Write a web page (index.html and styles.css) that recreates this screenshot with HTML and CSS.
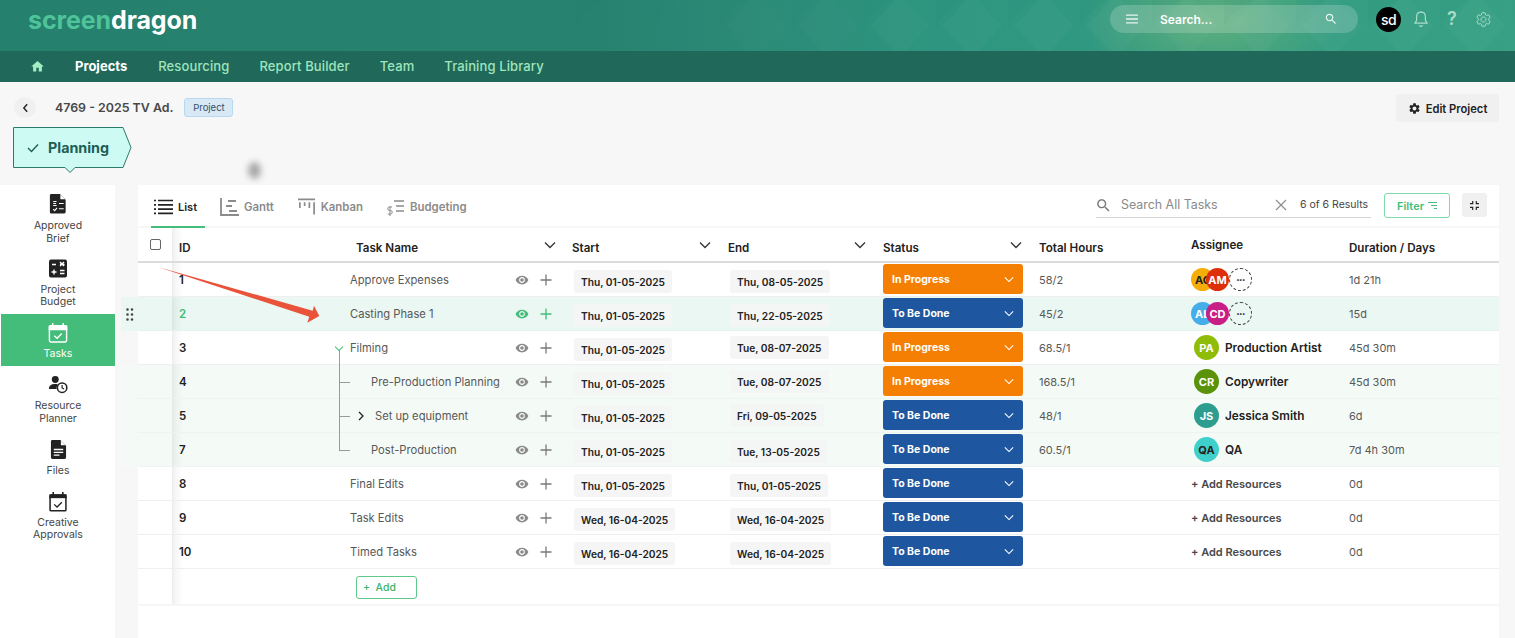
FILE: index.html
```html
<!DOCTYPE html>
<html lang="en">
<head>
<meta charset="utf-8">
<title>Screendragon - Tasks</title>
<link rel="stylesheet" href="styles.css">
</head>
<body>
<svg class="defs" width="0" height="0" aria-hidden="true">
  <symbol id="i-eye" viewBox="0 0 24 24"><path d="M12 4.5C7 4.5 2.73 7.61 1 12c1.73 4.39 6 7.5 11 7.5s9.27-3.11 11-7.5c-1.73-4.39-6-7.5-11-7.5zM12 17c-2.76 0-5-2.24-5-5s2.24-5 5-5 5 2.24 5 5-2.24 5-5 5zm0-8c-1.66 0-3 1.34-3 3s1.34 3 3 3 3-1.34 3-3-1.34-3-3-3z"/></symbol>
  <symbol id="i-plus" viewBox="0 0 12 12"><path d="M6 .5v11M.5 6h11" fill="none" stroke="currentColor" stroke-width="1.3"/></symbol>
  <symbol id="i-down" viewBox="0 0 12 8"><path d="M1 1.5l5 5 5-5" fill="none" stroke="currentColor" stroke-width="1.3"/></symbol>
  <symbol id="i-gear" viewBox="0 0 24 24"><path d="M19.14 12.94c.04-.3.06-.61.06-.94 0-.32-.02-.64-.07-.94l2.03-1.58c.18-.14.23-.41.12-.61l-1.92-3.32c-.12-.22-.37-.29-.59-.22l-2.39.96c-.5-.38-1.03-.7-1.62-.94l-.36-2.54c-.04-.24-.24-.41-.48-.41h-3.84c-.24 0-.43.17-.47.41l-.36 2.54c-.59.24-1.13.57-1.62.94l-2.39-.96c-.22-.08-.47 0-.59.22L2.74 8.87c-.12.21-.08.47.12.61l2.03 1.58c-.05.3-.09.63-.09.94s.02.64.07.94l-2.03 1.58c-.18.14-.23.41-.12.61l1.92 3.32c.12.22.37.29.59.22l2.39-.96c.5.38 1.03.7 1.62.94l.36 2.54c.05.24.24.41.48.41h3.84c.24 0 .44-.17.47-.41l.36-2.54c.59-.24 1.13-.56 1.62-.94l2.39.96c.22.08.47 0 .59-.22l1.92-3.32c.12-.22.07-.47-.12-.61l-2.01-1.58zM12 15.6c-1.98 0-3.6-1.62-3.6-3.6s1.62-3.6 3.6-3.6 3.6 1.62 3.6 3.6-1.62 3.6-3.6 3.6z"/></symbol>
  <symbol id="i-search" viewBox="0 0 24 24"><path d="M15.5 14h-.79l-.28-.27C15.41 12.59 16 11.11 16 9.5 16 5.91 13.09 3 9.5 3S3 5.91 3 9.5 5.91 16 9.5 16c1.61 0 3.09-.59 4.23-1.57l.27.28v.79l5 4.99L20.49 19l-4.99-5zm-6 0C7.01 14 5 11.99 5 9.5S7.01 5 9.5 5 14 7.01 14 9.5 11.99 14 9.5 14z"/></symbol>
</svg>

<div class="page">
  <header class="topbar">
    <svg class="topbar-pattern" width="100%" height="51" aria-hidden="true">
      <defs>
        <pattern id="diamonds" width="72" height="52" patternUnits="userSpaceOnUse">
          <path d="M36 -8Q48 10 66 26Q48 42 36 60Q24 42 6 26Q24 10 36 -8Z" fill="#ffffff" fill-opacity=".028"/>
          <path d="M0 -26Q12 -8 30 0Q12 8 0 26Q-12 8 -30 0Q-12 -8 0 -26Z" fill="#0b5a4c" fill-opacity=".035"/>
        </pattern>
        <linearGradient id="fade" x1="0" x2="1" y1="0" y2="0">
          <stop offset=".35" stop-color="#000"/><stop offset=".7" stop-color="#fff"/>
        </linearGradient>
        <mask id="fademask"><rect width="100%" height="51" fill="url(#fade)"/></mask>
      </defs>
      <rect width="100%" height="51" fill="url(#diamonds)" mask="url(#fademask)"/>
    </svg>
    <div class="logo"><span class="logo-a">screen</span><span class="logo-b">dragon</span></div>
    <div class="top-tools">
      <div class="global-search">
        <svg class="gs-menu" viewBox="0 0 12 10" width="12" height="10"><path d="M0 1.2h12M0 5h12M0 8.8h12" stroke="#e6f4ee" stroke-width="1.3"/></svg>
        <span class="gs-text">Search...</span>
        <svg class="gs-icon" width="14" height="14"><use href="#i-search"/></svg>
      </div>
      <div class="user-dot">sd</div>
      <svg class="tool-bell" viewBox="0 0 16 18" width="16" height="18"><path d="M8 2.2c-2.8 0-4.4 2-4.4 4.8v3.4L2 13.2h12l-1.6-2.8V7c0-2.8-1.600-4.800-4.400-4.800zM6.500 15.200c.3.900.9 1.300 1.500 1.300s1.200-.4 1.500-1.300M8 2.200V1" fill="none" stroke="#a9dcc8" stroke-width="1.200"/></svg>
      <span class="tool-help">?</span>
      <svg class="tool-gear" viewBox="0 0 24 24" width="17" height="17"><use href="#i-gear"/></svg>
    </div>
  </header>

  <nav class="mainnav">
    <svg class="nav-home" viewBox="0 0 24 24" width="15" height="15"><path d="M10 20v-6h4v6h5v-8h3L12 3 2 12h3v8z"/></svg>
    <a class="nav-link nav-current">Projects</a>
    <a class="nav-link">Resourcing</a>
    <a class="nav-link">Report Builder</a>
    <a class="nav-link">Team</a>
    <a class="nav-link">Training Library</a>
  </nav>

  <div class="crumbs">
    <button class="back"><svg viewBox="0 0 8 12" width="7" height="10"><path d="M6 1.500L2 6l4 4.500" fill="none" stroke="#222" stroke-width="1.700"/></svg></button>
    <h1 class="proj-title">4769 - 2025 TV Ad.</h1>
    <span class="proj-badge">Project</span>
    <button class="edit-btn"><svg width="13" height="13"><use href="#i-gear"/></svg>Edit Project</button>
  </div>

  <div class="stage">
    <svg class="stage-shape" viewBox="0 0 120 47" width="120" height="47" aria-hidden="true"><path d="M.5.500H110l8 20-8 20H62l-5 5-5-5H.5z" fill="#cdfbf3" stroke="#2c7a6a"/></svg>
    <svg class="stage-check" viewBox="0 0 12 10" width="12" height="10"><path d="M1 5l3.500 3.500L11 1.500" fill="none" stroke="#1d5e55" stroke-width="1.400"/></svg>
    <span class="stage-text">Planning</span>
  </div>

  <div class="main">
    <aside class="side">
      <a class="side-item side-first">
        <svg viewBox="0 0 20 22" width="20" height="21"><path d="M3 1h9l6 6v13a1.500 1.500 0 0 1-1.500 1.500h-14A1.500 1.500 0 0 1 1.500 20V2.500A1.500 1.500 0 0 1 3 1z" fill="#222"/><path d="M12.500 1.500v5h5z" fill="#fff"/><path d="M5 9h3.500M5 11h3M5 13h3.500M11 11h5M5 17l1.500 1.500L9 15.500M11 16.500h5" stroke="#fff" stroke-width="1.100" fill="none"/></svg>
        <span>Approved<br>Brief</span>
      </a>
      <a class="side-item">
        <svg viewBox="0 0 20 20" width="20" height="21"><rect x="1" y="1" width="18" height="18" rx="2" fill="#222"/><path d="M4 6h4M6 11v5M3.500 13.500h5M12 6h4.500M12 12h4.500M12 15h4.500M12 3.500l4 4M16 3.500l-4 4" stroke="#fff" stroke-width="1.400" fill="none"/></svg>
        <span>Project<br>Budget</span>
      </a>
      <a class="side-item side-active">
        <svg viewBox="0 0 20 22" width="20" height="21"><path d="M2.500 4h15a1.500 1.500 0 0 1 1.500 1.500v14a1.500 1.500 0 0 1-1.500 1.500h-15A1.500 1.500 0 0 1 1 19.500v-14A1.500 1.500 0 0 1 2.500 4z" fill="none" stroke="#fff" stroke-width="1.500"/><path d="M1 4.500h18v3.500H1zM4.500 1v4M15.500 1v4" fill="#fff" stroke="#fff" stroke-width="1.500"/><path d="M6 14.500l3 2.500 5-5" fill="none" stroke="#fff" stroke-width="1.400"/></svg>
        <span>Tasks</span>
      </a>
      <a class="side-item">
        <svg viewBox="0 0 22 20" width="20" height="20"><circle cx="8" cy="4.500" r="3.800" fill="#222"/><path d="M1 15c0-4 3-5.500 7-5.500 1 0 2 .1 2.900.4A6.500 6.500 0 0 0 9.500 15z" fill="#222"/><circle cx="15.500" cy="13.500" r="5.200" fill="#fff" stroke="#222" stroke-width="1.700"/><path d="M15.500 10.500v3.300l2.200 1.200" fill="none" stroke="#222" stroke-width="1.300"/></svg>
        <span>Resource<br>Planner</span>
      </a>
      <a class="side-item">
        <svg viewBox="0 0 18 22" width="17" height="21"><path d="M2.500 1H11l6 6v12.500a1.500 1.500 0 0 1-1.500 1.500h-13A1.500 1.500 0 0 1 1 19.500v-17A1.500 1.500 0 0 1 2.500 1z" fill="#222"/><path d="M11.500 1.500v5h5z" fill="#fff"/><path d="M4 11h10M4 14h10M4 17h6" stroke="#fff" stroke-width="1.400"/></svg>
        <span>Files</span>
      </a>
      <a class="side-item">
        <svg viewBox="0 0 20 22" width="20" height="21"><rect x="1.700" y="4.200" width="16.600" height="16.600" rx="1" fill="#fff" stroke="#222" stroke-width="1.600"/><path d="M1 3.500h18v4H1z" fill="#222"/><path d="M5 1v4M15 1v4" stroke="#222" stroke-width="1.700"/><path d="M6 14l3 2.800 5-5" fill="none" stroke="#222" stroke-width="1.400"/></svg>
        <span>Creative<br>Approvals</span>
      </a>
    </aside>

    <section class="board">
      <div class="tabbar">
        <div class="tabs">
          <a class="tab tab-active">
            <svg viewBox="0 0 19 16" width="19" height="16"><path d="M0 1.500h2M4 1.500h15M0 5.800h2M4 5.800h15M0 10.100h2M4 10.100h15M0 14.400h2M4 14.400h15" stroke="#222" stroke-width="1.700"/></svg>List
          </a>
          <a class="tab">
            <svg viewBox="0 0 19 18" width="19" height="18"><path d="M1 0v17h18M8 3h8M6 8h6M9 13h8" fill="none" stroke="#8b8b8b" stroke-width="1.800"/></svg>Gantt
          </a>
          <a class="tab">
            <svg viewBox="0 0 19 18" width="18" height="18"><path d="M0 1h18M2 4v6M7 4v4M12 4v6M17 4v13" fill="none" stroke="#8b8b8b" stroke-width="1.800"/></svg>Kanban
          </a>
          <a class="tab">
            <svg viewBox="0 0 18 18" width="18" height="18"><path d="M7 3h10M9 8h8M9 13h8" stroke="#8b8b8b" stroke-width="1.600"/><path d="M5 9H2.500a1.500 1.500 0 0 0 0 3.500h1a1.500 1.500 0 0 1 0 3.500H.8M3 8v10" fill="none" stroke="#8b8b8b" stroke-width="1"/></svg>Budgeting
          </a>
        </div>
        <div class="board-tools">
          <div class="task-search">
            <svg class="ts-icon" width="17" height="17"><use href="#i-search"/></svg>
            <span class="ts-text">Search All Tasks</span>
            <svg class="ts-x" viewBox="0 0 12 12" width="12" height="12"><path d="M1 1l10 10M11 1L1 11" stroke="#8a8a8a" stroke-width="1.100"/></svg>
            <span class="ts-count">6 of 6 Results</span>
          </div>
          <button class="filter-btn">Filter<svg viewBox="0 0 9 7" width="9" height="7"><path d="M0 .5h9M3 3.500h6M6 6.500h3" stroke="#43bd79" stroke-width="1"/></svg></button>
          <button class="full-btn"><svg viewBox="0 0 10 10" width="9" height="9"><path d="M3 0v3H0M7 0v3h3M3 10V7H0M7 10V7h3" fill="none" stroke="#222" stroke-width="1.300"/></svg></button>
        </div>
      </div>

      <div class="row head">
        <div class="gut"></div>
        <div class="c-check"><span class="checkbox"></span></div>
        <div class="c-id">ID</div>
        <div class="c-h c-h-name">Task Name<svg width="12" height="8"><use href="#i-down"/></svg></div>
        <div class="c-h">Start<svg width="12" height="8"><use href="#i-down"/></svg></div>
        <div class="c-h">End<svg width="12" height="8"><use href="#i-down"/></svg></div>
        <div class="c-h c-h-status">Status<svg width="12" height="8"><use href="#i-down"/></svg></div>
        <div class="c-h">Total Hours</div>
        <div class="c-h c-h-assign">Assignee</div>
        <div class="c-h">Duration / Days</div>
      </div>

      <div class="row">
        <div class="gut"></div><div class="c-check"></div><div class="c-id">1</div>
        <div class="c-name"><span class="t-name">Approve Expenses</span><svg class="eye" width="14" height="14"><use href="#i-eye"/></svg><svg class="plus" width="12" height="12"><use href="#i-plus"/></svg></div>
        <div class="c-date"><span class="pill">Thu, 01-05-2025</span></div>
        <div class="c-date"><span class="pill">Thu, 08-05-2025</span></div>
        <div class="c-status"><span class="st st-prog">In Progress<svg width="10" height="7"><use href="#i-down"/></svg></span></div>
        <div class="c-text">58/2</div>
        <div class="c-assign"><span class="av av-sm av-ac">AC</span><span class="av av-sm av-am">AM</span><span class="av-more">•••</span></div>
        <div class="c-text">1d 21h</div>
      </div>

      <div class="row row-hl">
        <div class="gut"><svg viewBox="0 0 8 13" width="8" height="13"><path d="M1.500 1.500h.01M6 1.500h.01M1.500 6.500h.01M6 6.500h.01M1.500 11.500h.01M6 11.500h.01" stroke="#444" stroke-width="2.600" stroke-linecap="round"/></svg></div>
        <div class="c-check"></div><div class="c-id c-id-on">2</div>
        <div class="c-name c-name-on"><span class="t-name">Casting Phase 1</span><svg class="eye" width="14" height="14"><use href="#i-eye"/></svg><svg class="plus" width="12" height="12"><use href="#i-plus"/></svg></div>
        <div class="c-date"><span class="pill">Thu, 01-05-2025</span></div>
        <div class="c-date"><span class="pill">Thu, 22-05-2025</span></div>
        <div class="c-status"><span class="st st-todo">To Be Done<svg width="10" height="7"><use href="#i-down"/></svg></span></div>
        <div class="c-text">45/2</div>
        <div class="c-assign"><span class="av av-sm av-al">AL</span><span class="av av-sm av-cd">CD</span><span class="av-more">•••</span></div>
        <div class="c-text">15d</div>
      </div>

      <div class="row">
        <div class="gut"></div><div class="c-check"></div><div class="c-id">3</div>
        <div class="c-name tree-root"><span class="t-name">Filming</span><svg class="eye" width="14" height="14"><use href="#i-eye"/></svg><svg class="plus" width="12" height="12"><use href="#i-plus"/></svg></div>
        <div class="c-date"><span class="pill">Thu, 01-05-2025</span></div>
        <div class="c-date c-date-up"><span class="pill">Tue, 08-07-2025</span></div>
        <div class="c-status"><span class="st st-prog">In Progress<svg width="10" height="7"><use href="#i-down"/></svg></span></div>
        <div class="c-text">68.5/1</div>
        <div class="c-assign c-assign-one"><span class="av av-pa">PA</span><b class="who">Production Artist</b></div>
        <div class="c-text">45d 30m</div>
      </div>

      <div class="row row-sub">
        <div class="gut"></div><div class="c-check"></div><div class="c-id">4</div>
        <div class="c-name child"><span class="t-name">Pre-Production Planning</span><svg class="eye" width="14" height="14"><use href="#i-eye"/></svg><svg class="plus" width="12" height="12"><use href="#i-plus"/></svg></div>
        <div class="c-date"><span class="pill">Thu, 01-05-2025</span></div>
        <div class="c-date c-date-up"><span class="pill">Tue, 08-07-2025</span></div>
        <div class="c-status"><span class="st st-prog">In Progress<svg width="10" height="7"><use href="#i-down"/></svg></span></div>
        <div class="c-text">168.5/1</div>
        <div class="c-assign c-assign-one"><span class="av av-cr">CR</span><b class="who">Copywriter</b></div>
        <div class="c-text">45d 30m</div>
      </div>

      <div class="row row-sub">
        <div class="gut"></div><div class="c-check"></div><div class="c-id">5</div>
        <div class="c-name child child-exp"><svg class="exp" viewBox="0 0 6 10" width="6" height="10"><path d="M1 1l4 4-4 4" fill="none" stroke="#222" stroke-width="1.300"/></svg><span class="t-name">Set up equipment</span><svg class="eye" width="14" height="14"><use href="#i-eye"/></svg><svg class="plus" width="12" height="12"><use href="#i-plus"/></svg></div>
        <div class="c-date"><span class="pill">Thu, 01-05-2025</span></div>
        <div class="c-date c-date-up"><span class="pill">Fri, 09-05-2025</span></div>
        <div class="c-status"><span class="st st-todo">To Be Done<svg width="10" height="7"><use href="#i-down"/></svg></span></div>
        <div class="c-text">48/1</div>
        <div class="c-assign c-assign-one"><span class="av av-js">JS</span><b class="who">Jessica Smith</b></div>
        <div class="c-text">6d</div>
      </div>

      <div class="row row-sub">
        <div class="gut"></div><div class="c-check"></div><div class="c-id">7</div>
        <div class="c-name child child-last"><span class="t-name">Post-Production</span><svg class="eye" width="14" height="14"><use href="#i-eye"/></svg><svg class="plus" width="12" height="12"><use href="#i-plus"/></svg></div>
        <div class="c-date"><span class="pill">Thu, 01-05-2025</span></div>
        <div class="c-date"><span class="pill">Tue, 13-05-2025</span></div>
        <div class="c-status"><span class="st st-todo">To Be Done<svg width="10" height="7"><use href="#i-down"/></svg></span></div>
        <div class="c-text">60.5/1</div>
        <div class="c-assign c-assign-one"><span class="av av-qa">QA</span><b class="who">QA</b></div>
        <div class="c-text">7d 4h 30m</div>
      </div>

      <div class="row">
        <div class="gut"></div><div class="c-check"></div><div class="c-id">8</div>
        <div class="c-name"><span class="t-name">Final Edits</span><svg class="eye" width="14" height="14"><use href="#i-eye"/></svg><svg class="plus" width="12" height="12"><use href="#i-plus"/></svg></div>
        <div class="c-date"><span class="pill">Thu, 01-05-2025</span></div>
        <div class="c-date"><span class="pill">Thu, 01-05-2025</span></div>
        <div class="c-status"><span class="st st-todo">To Be Done<svg width="10" height="7"><use href="#i-down"/></svg></span></div>
        <div class="c-text"></div>
        <div class="c-add">+ Add Resources</div>
        <div class="c-text">0d</div>
      </div>

      <div class="row">
        <div class="gut"></div><div class="c-check"></div><div class="c-id">9</div>
        <div class="c-name"><span class="t-name">Task Edits</span><svg class="eye" width="14" height="14"><use href="#i-eye"/></svg><svg class="plus" width="12" height="12"><use href="#i-plus"/></svg></div>
        <div class="c-date"><span class="pill">Wed, 16-04-2025</span></div>
        <div class="c-date"><span class="pill">Wed, 16-04-2025</span></div>
        <div class="c-status"><span class="st st-todo">To Be Done<svg width="10" height="7"><use href="#i-down"/></svg></span></div>
        <div class="c-text"></div>
        <div class="c-add">+ Add Resources</div>
        <div class="c-text">0d</div>
      </div>

      <div class="row">
        <div class="gut"></div><div class="c-check"></div><div class="c-id">10</div>
        <div class="c-name"><span class="t-name">Timed Tasks</span><svg class="eye" width="14" height="14"><use href="#i-eye"/></svg><svg class="plus" width="12" height="12"><use href="#i-plus"/></svg></div>
        <div class="c-date"><span class="pill">Wed, 16-04-2025</span></div>
        <div class="c-date"><span class="pill">Wed, 16-04-2025</span></div>
        <div class="c-status"><span class="st st-todo">To Be Done<svg width="10" height="7"><use href="#i-down"/></svg></span></div>
        <div class="c-text"></div>
        <div class="c-add">+ Add Resources</div>
        <div class="c-text">0d</div>
      </div>

      <div class="row row-addline">
        <div class="gut"></div><div class="c-check"></div><div class="c-id"></div>
        <div class="c-addbtn"><button class="add-btn">+&nbsp; Add</button></div>
      </div>
      <div class="board-rest"></div>
    </section>
  </div>

  <span class="smudge"></span>
  <svg class="arrow" viewBox="0 0 170 62" width="170" height="62" aria-hidden="true"><path d="M0 0L154.700 43.700L156 38.700L161.300 49L149.300 55.700L151.300 49.700Z" fill="#e8533a"/></svg>
</div>
</body>
</html>
```

FILE: styles.css
```css
* { box-sizing: border-box; }
html, body { margin: 0; padding: 0; height: 638px; overflow: hidden; }
body { font-family: Inter, "Liberation Sans", sans-serif; background: #f7f7f7; color: #222; }
button { font-family: inherit; border: 0; padding: 0; cursor: pointer; }
.defs { position: absolute; }
.page { position: relative; height: 638px; overflow: hidden; display: flex; flex-direction: column; }

/* top bar */
.topbar {
  position: relative; height: 51px; flex: none; display: flex; align-items: flex-start; justify-content: space-between;
  padding: 5px 23px 0 28px;
  background:
    radial-gradient(ellipse 130px 70px at 1212px 20px, rgba(130,190,120,.55), rgba(130,190,120,0)),
    linear-gradient(90deg, #25806d 0%, #288270 40%, #2e9680 62%, #38a184 100%);
}
.topbar-pattern { position: absolute; left: 0; top: 0; }
.logo { position: relative; font-size: 25px; line-height: 30px; font-weight: 700; letter-spacing: -.1px; font-family: Inter, sans-serif; }
.logo-a { color: #4fc39a; }
.logo-b { color: #fff; }
.top-tools { position: relative; display: flex; align-items: center; height: 28px; }
.global-search {
  width: 248px; height: 28px; border-radius: 14px; background: rgba(255,255,255,.18);
  display: flex; align-items: center; padding: 0 20px 0 16px; margin-right: 18px;
}
.gs-menu { flex: none; }
.gs-text { flex: 1; margin-left: 22px; color: #fff; font-size: 12px; font-weight: 600; }
.gs-icon { fill: #eaf6f0; flex: none; }
.user-dot {
  width: 25px; height: 25px; border-radius: 50%; background: #000; color: #fff; font-size: 14px; font-weight: 500;
  display: flex; align-items: center; justify-content: center; margin-right: 12px; letter-spacing: -.5px;
}
.tool-bell { margin-right: 18px; }
.tool-help { color: #a9dcc8; font-size: 18px; font-weight: 600; width: 10px; margin-right: 18px; line-height: 20px; }
.tool-gear { fill: none; stroke: #a9dcc8; stroke-width: 1.400; }

/* nav */
.mainnav {
  height: 31px; flex: none; background: #20695a; display: flex; align-items: center; padding: 0 0 1px 30px; gap: 30px;
}
.nav-home { fill: #a6ecc4; margin-right: 0; }
.nav-link { font-size: 13px; font-weight: 500; color: #9fe4bd; letter-spacing: .12px; }
.nav-current { color: #fff; font-weight: 700; letter-spacing: 0; margin-right: 1px; }

/* crumbs */
.crumbs { height: 45px; flex: none; display: flex; align-items: flex-start; padding: 15px 16px 0 14px; }
.back { width: 22px; height: 21px; border-radius: 50%; background: #f0f0f0; display: flex; align-items: center; justify-content: center; margin-right: 19px; }
.proj-title { margin: 0 11px 0 0; font-size: 12.400px; line-height: 21px; font-weight: 600; color: #484848; }
.proj-badge { margin-top: 1px; width: 49px; height: 19px; border-radius: 3px; background: #d8e9f5; border: 1px solid #b7d9f0; color: #34506b; font-size: 9.500px; line-height: 17px; text-align: center; }
.edit-btn { margin-left: auto; margin-top: -3px; width: 103px; height: 28px; padding-top: 1px; background: #f0f0f0; border-radius: 3px; font-size: 11.200px; font-weight: 600; color: #222; display: flex; align-items: center; justify-content: center; gap: 5px; }
.edit-btn svg { fill: #222; }

/* stage chip */
.stage { position: relative; flex: none; height: 41px; width: 118px; margin-left: 13px; display: flex; align-items: center; padding-left: 14px; gap: 9px; }
.stage-shape { position: absolute; left: 0; top: 0; }
.stage-check, .stage-text { position: relative; }
.stage-text { font-size: 14.300px; font-weight: 700; color: #1d5e55; }

/* layout */
.main { flex: 1; min-height: 0; margin-top: 17px; display: flex; }
.side { width: 115px; flex: none; background: #fff; padding-left: 1px; }
.side-item { display: flex; flex-direction: column; align-items: center; padding: 8px 0 5.500px; font-size: 10.500px; line-height: 12.500px; color: #444; text-align: center; }
.side-item svg { height: 21px; margin-bottom: 5px; }
.side-first svg { margin-bottom: 6px; }
.side-first { padding-bottom: 4.500px; }
.side-active { background: #43bd79; color: #fff; }
.board { width: 1378px; margin-left: 6px; display: flex; flex-direction: column; }

/* tabs */
.tabbar { margin-left: 17px; height: 43px; flex: none; background: #fff; border-bottom: 2px solid #f7f7f7; display: flex; justify-content: space-between; }
.tabs { display: flex; padding-left: 16px; gap: 24px; }
.tab { position: relative; display: flex; align-items: center; gap: 5px; padding-top: 2px; font-size: 11.400px; font-weight: 600; color: #8b8b8b; height: 41px; }
.tab-active { color: #222; font-size: 11px; margin-right: -1px; }
.tab-active::after { content: ""; position: absolute; left: -3px; right: -8px; bottom: -2px; height: 2px; background: #43bd79; }
.board-tools { display: flex; align-items: flex-start; padding: 8px 12px 0 0; gap: 12px; }
.task-search { width: 275px; height: 25px; border-bottom: 1px solid #d4d4d4; display: flex; align-items: center; margin-right: 1px; padding-left: 0; }
.ts-icon { fill: #777; margin-left: -1px; }
.ts-text { margin: -1px 0 0 9px; width: 154px; font-size: 12.400px; color: #8a8a8a; white-space: nowrap; }
.ts-x { flex: none; margin-right: 13px; }
.ts-count { font-size: 10.500px; color: #444; white-space: nowrap; margin-top: -2px; }
.filter-btn { width: 66px; height: 25px; background: #fff; border: 1.500px solid #7edaa8; border-radius: 3px; font-size: 11px; font-weight: 600; color: #43bd79; display: flex; align-items: center; justify-content: center; gap: 4px; }
.full-btn { width: 25px; height: 24px; background: #f0f0f0; border-radius: 3px; display: flex; align-items: center; justify-content: center; }

/* rows */
.row {
  display: grid; height: 34px; flex: none;
  grid-template-columns: 17px 34px 178px 222px 156px 155px 156px 152px 158px 150px;
  background: #fff; align-items: stretch;
}
.row > div { border-bottom: 1px solid #efefef; }
.row > .gut { background: #f7f7f7; border-bottom: 0; display: flex; align-items: center; justify-content: center; }
.row-hl, .row-hl > .gut { background: #ebf7f2; }
.row-sub, .row-sub > .gut { background: #f4fbf7; }
.row-hl > div { border-bottom-color: #e6f2ec; }
.row-sub > div { border-bottom-color: #edf5f0; }
.row.head { height: 35px; }
.head > div { border-bottom: 2px solid #dcdcdc; }
.head > .gut { border-bottom: 0; }
.c-check { display: flex; justify-content: center; padding-top: 11px; }
.checkbox { width: 11px; height: 11px; border: 1px solid #666; border-radius: 2px; background: #fff; }
.c-id { display: flex; align-items: center; padding-left: 7px; font-size: 11.500px; font-weight: 600; color: #222; background: linear-gradient(90deg, rgba(0,0,0,.07), rgba(0,0,0,.03) 4px, rgba(0,0,0,0) 11px); }
.c-id-on { color: #43bd79; }
.head .c-id { padding-top: 6px; }
.c-h { display: flex; align-items: center; justify-content: space-between; font-size: 11.600px; font-weight: 600; color: #222; padding: 6px 17px 0 0; }
.c-h svg { color: #333; margin-top: -6px; }
.c-h-name { padding-left: 6px; padding-right: 16px; }
.c-h-status { padding-right: 17px; }
.c-h-assign { padding-top: 1px; }
.c-name { position: relative; display: flex; align-items: center; padding-right: 20px; font-size: 11.200px; color: #585858; }
.t-name { flex: 1; white-space: nowrap; }
.eye { fill: #8a8a8a; flex: none; margin-right: 11px; }
.plus { color: #7a7a7a; flex: none; }
.c-name-on .eye { fill: #43bd79; }
.c-name-on .plus { color: #43bd79; }
.c-date { display: flex; align-items: center; padding-top: 4px; padding-left: 2px; }
.c-date-up { padding-top: 0; }
.pill { background: #f5f5f5; border-radius: 3px; height: 23px; padding: 0 7px; display: flex; align-items: center; font-size: 10.200px; font-weight: 600; color: #222; white-space: nowrap; }
.row-sub .pill, .row-hl .pill { background: #f4f6f5; }
.c-status { display: flex; align-items: center; }
.st { width: 140px; height: 30px; border-radius: 3px; display: flex; align-items: center; justify-content: space-between; padding: 1px 9px 0; color: #fff; font-size: 10.500px; font-weight: 700; margin-top: -2px; }
.st svg { color: #fff; }
.st-prog { background: #f57f02; }
.st-todo { background: #1e579f; }
.c-text { display: flex; align-items: center; font-size: 11px; color: #585858; }
.c-assign { display: flex; align-items: center; }
.c-assign-one { padding-left: 3px; }
.av { width: 25px; height: 25px; border-radius: 50%; display: flex; align-items: center; justify-content: center; font-size: 11px; font-weight: 700; color: #fff; flex: none; overflow: hidden; }
.av-sm { width: 23px; height: 23px; }
.av-sm + .av-sm { margin-left: -8px; }
.av-ac { background: #f5ae09; color: #222; justify-content: flex-start; padding-left: 4px; }
.av-am { background: #de2f0b; }
.av-al { background: #45aee9; justify-content: flex-start; padding-left: 4px; }
.av-cd { background: #c91e86; }
.av-more { width: 23px; height: 23px; border-radius: 50%; border: 1px dashed #444; display: flex; align-items: center; justify-content: center; font-size: 6px; color: #222; letter-spacing: -.5px; flex: none; background: #fff; }
.row-hl .av-more { background: #ebf7f2; }
.av-pa { background: #8fbc06; }
.av-cr { background: #5a920a; }
.av-js { background: #2d9d8f; }
.av-qa { background: #3fd0cc; color: #222; }
.who { margin-left: 6px; font-size: 11.800px; font-weight: 600; color: #222; white-space: nowrap; }
.c-add { display: flex; align-items: center; padding-top: 1px; font-size: 11px; font-weight: 600; color: #484848; }

/* tree */
.child { padding-left: 21px; }
.child::before { content: ""; position: absolute; left: -11px; top: 0; bottom: -1px; width: 1px; background: #9a9a9a; }
.child::after { content: ""; position: absolute; left: -11px; top: 50%; width: 11px; height: 1px; background: #9a9a9a; }
.child-last::before { bottom: 50%; }
.child-exp { padding-left: 8px; }
.exp { margin-right: 11px; flex: none; margin-left: 0; }
.child-exp .exp { margin-left: 0; }
.tree-root::before { content: ""; position: absolute; left: -14px; top: 13px; width: 5px; height: 5px; border: solid #43bd79; border-width: 0 1px 1px 0; transform: rotate(45deg); }
.tree-root::after { content: ""; position: absolute; left: -11px; top: 20px; bottom: -1px; width: 1px; background: #9a9a9a; }

/* add line */
.row-addline { height: 37px; }
.row-addline > .c-id, .row-addline > .c-check { border-bottom: 2px solid #f6f6f6; }
.c-addbtn { grid-column: 4 / -1; border-bottom: 2px solid #f6f6f6 !important; padding: 6px 0 0 6px; }
.add-btn { width: 61px; height: 23px; background: #fff; border: 1px solid #5fc98b; border-radius: 3px; font-size: 10.500px; font-weight: 500; color: #3eb36e; text-align: left; padding-left: 6px; }
.board-rest { flex: 1; margin-left: 17px; background: #fff; }

/* overlays */
.smudge { position: absolute; left: 248px; top: 162px; width: 13px; height: 17px; border-radius: 50%; background: #a8a8a8; filter: blur(3px); }
.arrow { position: absolute; left: 158px; top: 267px; }
```
